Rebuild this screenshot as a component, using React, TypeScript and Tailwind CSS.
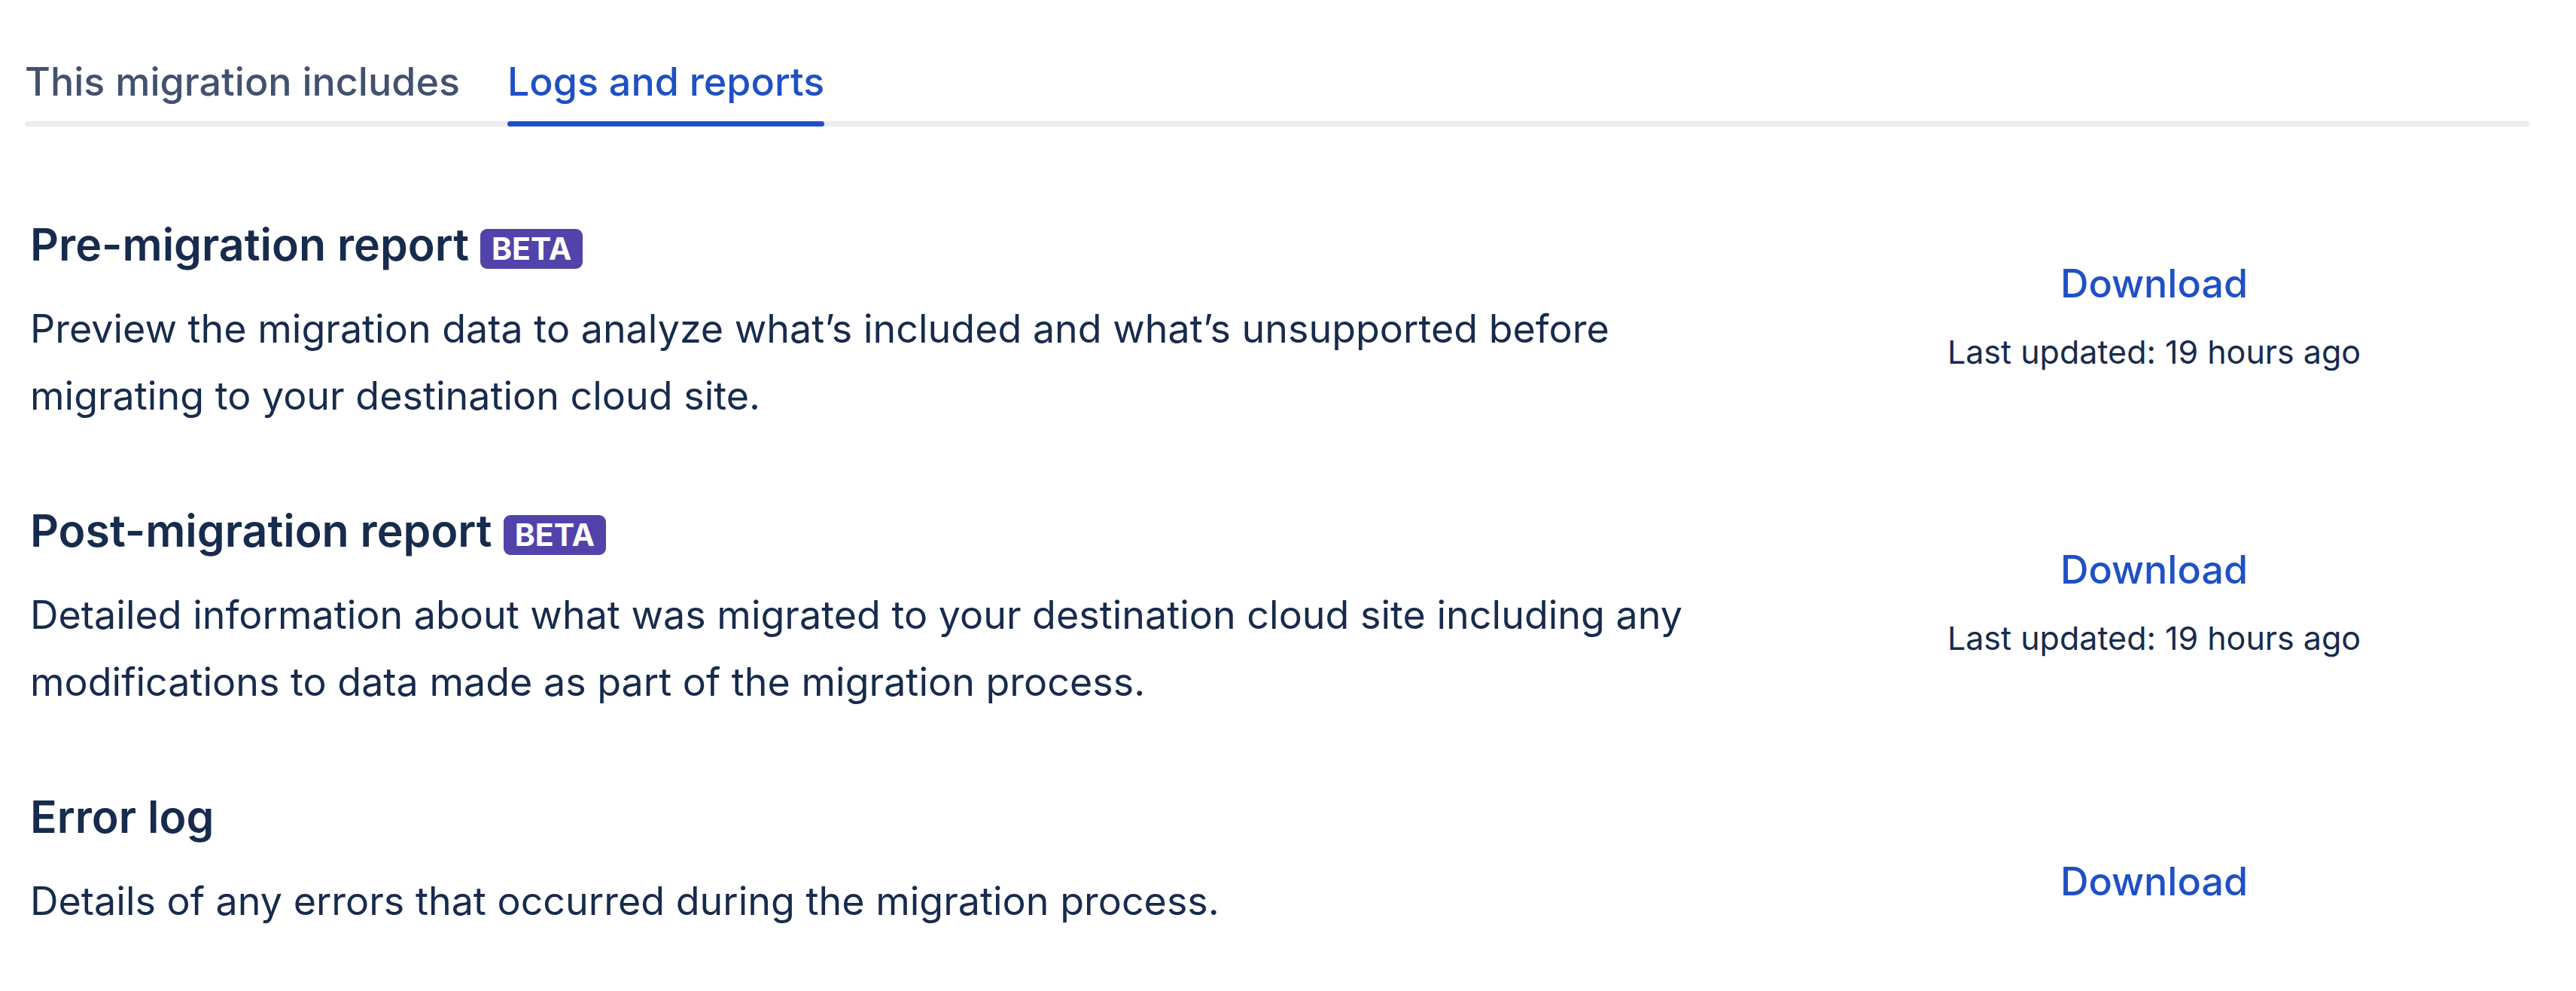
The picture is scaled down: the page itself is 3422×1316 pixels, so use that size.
import React from 'react';

type Report = {
  title: string;
  beta?: boolean;
  description: string;
  updated?: string;
};

const reports: Report[] = [
  {
    title: 'Pre-migration report',
    beta: true,
    description:
      'Preview the migration data to analyze what’s included and what’s unsupported before migrating to your destination cloud site.',
    updated: 'Last updated: 19 hours ago',
  },
  {
    title: 'Post-migration report',
    beta: true,
    description:
      'Detailed information about what was migrated to your destination cloud site including any modifications to data made as part of the migration process.',
    updated: 'Last updated: 19 hours ago',
  },
  {
    title: 'Error log',
    description: 'Details of any errors that occurred during the migration process.',
  },
];

const Tab = ({ label, active }: { label: string; active?: boolean }) => (
  <div className="flex flex-col">
    <span
      className={`text-[52px] leading-[74px] font-medium whitespace-nowrap ${
        active ? 'text-[#1F50C5]' : 'text-[#42526E]'
      }`}
    >
      {label}
    </span>
    <div
      className={`relative z-10 mt-[15px] h-[7px] rounded-full ${active ? 'bg-[#1F50C5]' : 'bg-transparent'}`}
    />
  </div>
);

const ReportRow = ({ report }: { report: Report }) => (
  <div className="flex items-start pl-[7px]">
    <div className="w-[2323px] flex-none">
      <div className="flex items-center gap-[15px]">
        <h3 className="text-[59px] leading-[74px] font-semibold text-[#172B4D]">{report.title}</h3>
        {report.beta && (
          <span className="mt-[10px] rounded-[9px] bg-[#5243AA] px-[15px] text-[41px] leading-[53px] font-bold text-white">
            BETA
          </span>
        )}
      </div>
      <p className="mt-[30px] max-w-[2260px] text-[52px] leading-[89px] text-[#172B4D]">{report.description}</p>
    </div>
    <div className={`flex flex-1 flex-col items-center ${report.updated ? 'pt-[52px]' : 'pt-[86px]'}`}>
      <button className="text-[52px] leading-[74px] font-medium text-[#1F50C5]">Download</button>
      {report.updated && (
        <span className="mt-[24px] text-[43px] leading-[59px] text-[#172B4D]">{report.updated}</span>
      )}
    </div>
  </div>
);

export default function App() {
  return (
    <div className="min-h-screen w-full bg-white pl-[33px] pr-[62px] pt-[72px] font-['Inter',sans-serif]">
      {/* Tabs */}
      <div className="flex flex-col">
        <div className="flex gap-[63px]">
          <Tab label="This migration includes" />
          <Tab label="Logs and reports" active />
        </div>
        <div className="-mt-[7px] h-[7px] rounded-full bg-[#EBECF0]" />
      </div>

      {/* Reports */}
      <div className="mt-[120px] flex flex-col gap-[98px]">
        {reports.map((r) => (
          <ReportRow key={r.title} report={r} />
        ))}
      </div>
    </div>
  );
}
